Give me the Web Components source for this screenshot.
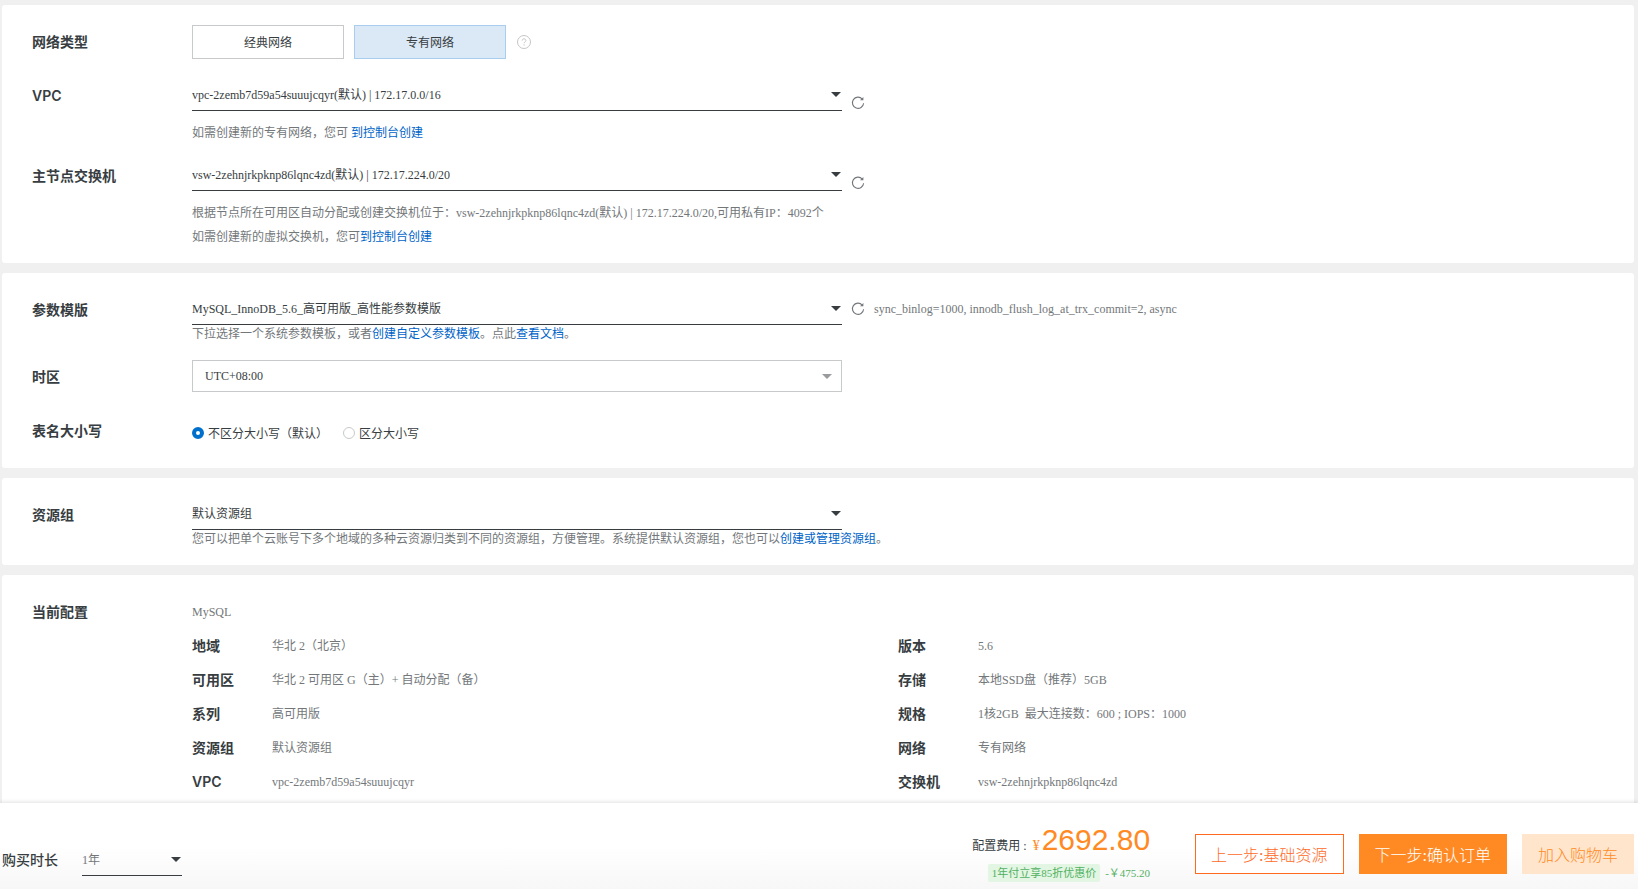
<!DOCTYPE html>
<html lang="zh-CN">
<head>
<meta charset="utf-8">
<title>确认配置</title>
<style>
    html {
        --ink: #373d41;
        --muted: #73777a;
        --link: #0064c8;
        --line: #c7c9cb;
        --orange: #ff8a24;
        --sans: Inter, "Noto Sans CJK SC", sans-serif;
    }
    body {
        margin: 0;
        background: #f0f0f1;
        color: var(--muted);
        font: 12px "Liberation Serif", "Noto Sans CJK SC", serif;
    }
</style>
</head>
<body>
<order-page>
    <form-section style="--row-gap: 14px">
        <form-row>
            <span slot="label">网络类型</span>
            <choice-group>
                <button type="button" aria-pressed="false">经典网络</button>
                <button type="button" aria-pressed="true">专有网络</button>
                <help-icon slot="after"></help-icon>
            </choice-group>
        </form-row>
        <form-row>
            <label slot="label" for="vpc">VPC</label>
            <drop-down>
                <select id="vpc"><option>vpc-2zemb7d59a54suuujcqyr(默认) | 172.17.0.0/16</option></select>
                <refresh-button slot="after"></refresh-button>
            </drop-down>
            <hint-text spaced>如需创建新的专有网络，您可 <a href="#">到控制台创建</a></hint-text>
        </form-row>
        <form-row>
            <label slot="label" for="vswitch">主节点交换机</label>
            <drop-down>
                <select id="vswitch"><option>vsw-2zehnjrkpknp86lqnc4zd(默认) | 172.17.224.0/20</option></select>
                <refresh-button slot="after"></refresh-button>
            </drop-down>
            <hint-text spaced>根据节点所在可用区自动分配或创建交换机位于：vsw-2zehnjrkpknp86lqnc4zd(默认) | 172.17.224.0/20,可用私有IP：4092个<br>如需创建新的虚拟交换机，您可<a href="#">到控制台创建</a></hint-text>
        </form-row>
    </form-section>

    <form-section>
        <form-row>
            <label slot="label" for="template">参数模版</label>
            <drop-down middle>
                <select id="template"><option>MySQL_InnoDB_5.6_高可用版_高性能参数模版</option></select>
                <refresh-button slot="after"></refresh-button>
                <span slot="after">sync_binlog=1000, innodb_flush_log_at_trx_commit=2, async</span>
            </drop-down>
            <hint-text>下拉选择一个系统参数模板，或者<a href="#">创建自定义参数模板</a>。点此<a href="#">查看文档</a>。</hint-text>
        </form-row>
        <form-row>
            <label slot="label" for="timezone">时区</label>
            <drop-down boxed>
                <select id="timezone"><option>UTC+08:00</option></select>
            </drop-down>
        </form-row>
        <form-row>
            <span slot="label">表名大小写</span>
            <radio-set name="table-case" label="表名大小写" options="不区分大小写（默认）|区分大小写"></radio-set>
        </form-row>
    </form-section>

    <form-section>
        <form-row>
            <label slot="label" for="group">资源组</label>
            <drop-down>
                <select id="group"><option>默认资源组</option></select>
            </drop-down>
            <hint-text>您可以把单个云账号下多个地域的多种云资源归类到不同的资源组，方便管理。系统提供默认资源组，您也可以<a href="#">创建或管理资源组</a>。</hint-text>
        </form-row>
    </form-section>

    <form-section grow>
        <form-row>
            <span slot="label">当前配置</span>
            <config-summary></config-summary>
        </form-row>
    </form-section>

    <order-bar slot="footer"></order-bar>
</order-page>

<script>
(function(){
    // Small helper, every element here only needs a template and an open root
    function define(name, html, setup){
        const template = document.createElement('template');
        template.innerHTML = html;
        customElements.define(name, class extends HTMLElement {
            constructor(){
                super();
                this.attachShadow({mode: 'open'});
                this.shadowRoot.appendChild(template.content.cloneNode(true));
            }

            connectedCallback(){
                if (setup && !this._ready) {
                    this._ready = true;
                    setup(this, this.shadowRoot);
                }
            }
        });
    }

    define('order-page', `
        <style>
            :host { display: flex; flex-direction: column; height: 100vh; }
            main {
                flex: 1;
                min-height: 0;
                overflow: auto;
                box-sizing: border-box;
                display: flex;
                flex-direction: column;
                gap: 10px;
                padding: 5px 4px 0 2px;
            }
        </style>
        <main><slot></slot></main>
        <slot name="footer"></slot>
    `);

    define('form-section', `
        <style>
            :host {
                display: flex;
                flex-direction: column;
                flex: none;
                gap: var(--row-gap, 20px);
                padding: 20px 30px var(--row-gap, 20px);
                background: #fff;
                border-radius: 3px;
            }
            :host([grow]) { flex: 1 0 auto; padding-bottom: 0; border-radius: 3px 3px 0 0; }
        </style>
        <slot></slot>
    `);

    define('form-row', `
        <style>
            :host { display: grid; grid-template-columns: 160px 1fr; }
            .name { font: 600 14px/34px var(--sans); color: var(--ink); }
        </style>
        <div class="name"><slot name="label"></slot></div>
        <div><slot></slot></div>
    `);

    define('choice-group', `
        <style>
            :host { display: flex; align-items: center; gap: 10px; margin-bottom: 6px; }
            ::slotted(button) {
                width: 152px;
                height: 34px;
                padding: 0;
                border: 1px solid var(--line);
                background: #fff;
                color: var(--ink);
                font: inherit;
            }
            ::slotted(button[aria-pressed="true"]) { background: #dbe8f6; border-color: #a9cdee; }
        </style>
        <slot></slot><slot name="after"></slot>
    `);

    define('help-icon', `
        <style>
            :host { display: flex; }
        </style>
        <svg width="16" height="16" viewBox="0 0 16 16" fill="none" stroke="#c4c6c8" role="img" aria-label="帮助">
            <circle cx="8" cy="8" r="6.5"/>
            <path d="M6.2 6.6c0-2.4 3.7-2.3 3.7-.1 0 1.4-1.8 1.3-1.8 2.8M8.1 10.4v1.2"/>
        </svg>
    `);

    define('refresh-button', `
        <style>
            :host { display: flex; }
            button { display: flex; padding: 0; border: 0; background: none; color: var(--muted); }
        </style>
        <button type="button" aria-label="刷新">
            <svg width="16" height="16" viewBox="0 0 16 16" fill="none" stroke="currentColor" stroke-width="1.1">
                <path d="M12.2 4A5.6 5.6 0 1 0 13.6 8.2"/>
                <path d="M13.4 1.9v3.3H10z" fill="currentColor" stroke="none"/>
            </svg>
        </button>
    `);

    define('drop-down', `
        <style>
            :host { display: flex; align-items: flex-end; gap: 8px; }
            :host([middle]) { align-items: center; }
            .field {
                display: grid;
                align-items: center;
                width: 100%;
                max-width: 650px;
                height: 32px;
                box-sizing: border-box;
                border-bottom: 1px solid var(--ink);
            }
            :host([boxed]) .field { border: 1px solid var(--line); }
            ::slotted(select) {
                grid-area: 1 / 1;
                width: 100%;
                height: 31px;
                padding: 0 20px 0 0;
                border: 0;
                background: none;
                appearance: none;
                color: var(--field-color, var(--ink));
                font: inherit;
            }
            :host([boxed]) ::slotted(select) { height: 30px; padding-left: 12px; }
            svg { grid-area: 1 / 1; justify-self: end; margin-right: 1px; color: var(--ink); pointer-events: none; }
            :host([boxed]) svg { margin-right: 9px; color: #999b9e; }
        </style>
        <div class="field">
            <slot></slot>
            <svg width="10" height="5" viewBox="0 0 10 5" fill="currentColor"><path d="M0 0h10L5 5z"/></svg>
        </div>
        <slot name="after"></slot>
    `);

    define('hint-text', `
        <style>
            :host { display: block; padding-top: 3px; line-height: 12px; }
            :host([spaced]) { padding-top: 10px; line-height: 24px; }
            ::slotted(a) { color: var(--link); text-decoration: none; }
        </style>
        <slot></slot>
    `);

    define('radio-set', `
        <style>
            :host { display: flex; gap: 15px; padding-top: 4px; height: 30px; align-items: center; color: var(--ink); }
            label { display: flex; align-items: center; gap: 4px; }
            input {
                appearance: none;
                width: 12px;
                height: 12px;
                margin: 0;
                border: 1px solid var(--line);
                border-radius: 50%;
                background: #fff;
            }
            input:checked { border: 4px solid #0070cc; }
        </style>
    `, function(host, root){
        host.setAttribute('role', 'radiogroup');
        host.setAttribute('aria-label', host.getAttribute('label'));
        host.getAttribute('options').split('|').forEach(function(text, i){
            const label = document.createElement('label');
            const input = document.createElement('input');
            input.type = 'radio';
            input.name = host.getAttribute('name');
            input.checked = i === 0;
            label.append(input, text);
            root.appendChild(label);
        });
    });

    // Read row by row: left column, then right column
    const CONFIG = [
        ['地域', '华北 2（北京）'], ['版本', '5.6'],
        ['可用区', '华北 2 可用区 G（主）+ 自动分配（备）'], ['存储', '本地SSD盘（推荐）5GB'],
        ['系列', '高可用版'], ['规格', '1核2GB\u00a0 最大连接数：600 ; IOPS：1000'],
        ['资源组', '默认资源组'], ['网络', '专有网络'],
        ['VPC', 'vpc-2zemb7d59a54suuujcqyr'], ['交换机', 'vsw-2zehnjrkpknp86lqnc4zd']
    ];

    define('config-summary', `
        <style>
            :host { display: block; line-height: 34px; }
            dl { display: grid; grid-template-columns: 1fr 1fr; margin: 0; }
            dl div { display: grid; grid-template-columns: 80px 1fr; }
            dt { font: 600 14px/34px var(--sans); color: var(--ink); }
            dd { margin: 0; }
        </style>
        <div>MySQL</div>
        <dl></dl>
    `, function(host, root){
        const list = root.querySelector('dl');
        CONFIG.forEach(function(item){
            const row = document.createElement('div');
            const dt = document.createElement('dt');
            const dd = document.createElement('dd');
            dt.textContent = item[0];
            dd.textContent = item[1];
            row.append(dt, dd);
            list.appendChild(row);
        });
    });

    define('order-bar', `
        <style>
            :host {
                display: flex;
                align-items: flex-end;
                gap: 15px;
                padding: 19px 4px 15px 2px;
                background: linear-gradient(#fff 50%, #f7f7f7);
                box-shadow: 0 -1px 4px rgba(0, 0, 0, .12);
                z-index: 1;
            }
            .term { display: flex; gap: 24px; margin: 0 auto -2px 0; }
            .term label { font: 500 14px/32px var(--sans); color: var(--ink); }
            drop-down { width: 100px; --field-color: var(--muted); }
            .cost { display: flex; flex-direction: column; align-items: flex-end; margin: 0 30px -8px 0; }
            .price { display: flex; align-items: baseline; color: var(--ink); line-height: 36px; }
            .price span { margin: 0 2px 0 6px; color: var(--orange); font-size: 14px; }
            .price strong { font: 30px/36px "Liberation Sans", sans-serif; color: var(--orange); }
            .saving { display: flex; gap: 5px; align-items: center; color: #52b162; font-size: 11px; line-height: 18px; }
            .saving mark { padding: 0 4px; border-radius: 2px; background: #e2f6e3; color: inherit; }
            button {
                height: 40px;
                padding: 0 16px;
                border: 0;
                font: 16px "Liberation Serif", "Noto Sans CJK SC", serif;
                font-weight: 300;
            }
            .back { padding: 0 15px; border: 1px solid #ff6a1f; background: #fff; color: #ff6a1f; }
            .next { background: var(--orange); color: #fff; }
            .cart { background: #ffe5cc; color: var(--orange); }
        </style>
        <div class="term">
            <label for="term">购买时长</label>
            <drop-down><select id="term"><option>1年</option></select></drop-down>
        </div>
        <div class="cost">
            <div class="price">配置费用 : <span>¥</span><strong>2692.80</strong></div>
            <div class="saving"><mark>1年付立享85折优惠价</mark>-￥475.20</div>
        </div>
        <button type="button" class="back">上一步:基础资源</button>
        <button type="button" class="next">下一步:确认订单</button>
        <button type="button" class="cart">加入购物车</button>
    `);
})();
</script>
</body>
</html>
